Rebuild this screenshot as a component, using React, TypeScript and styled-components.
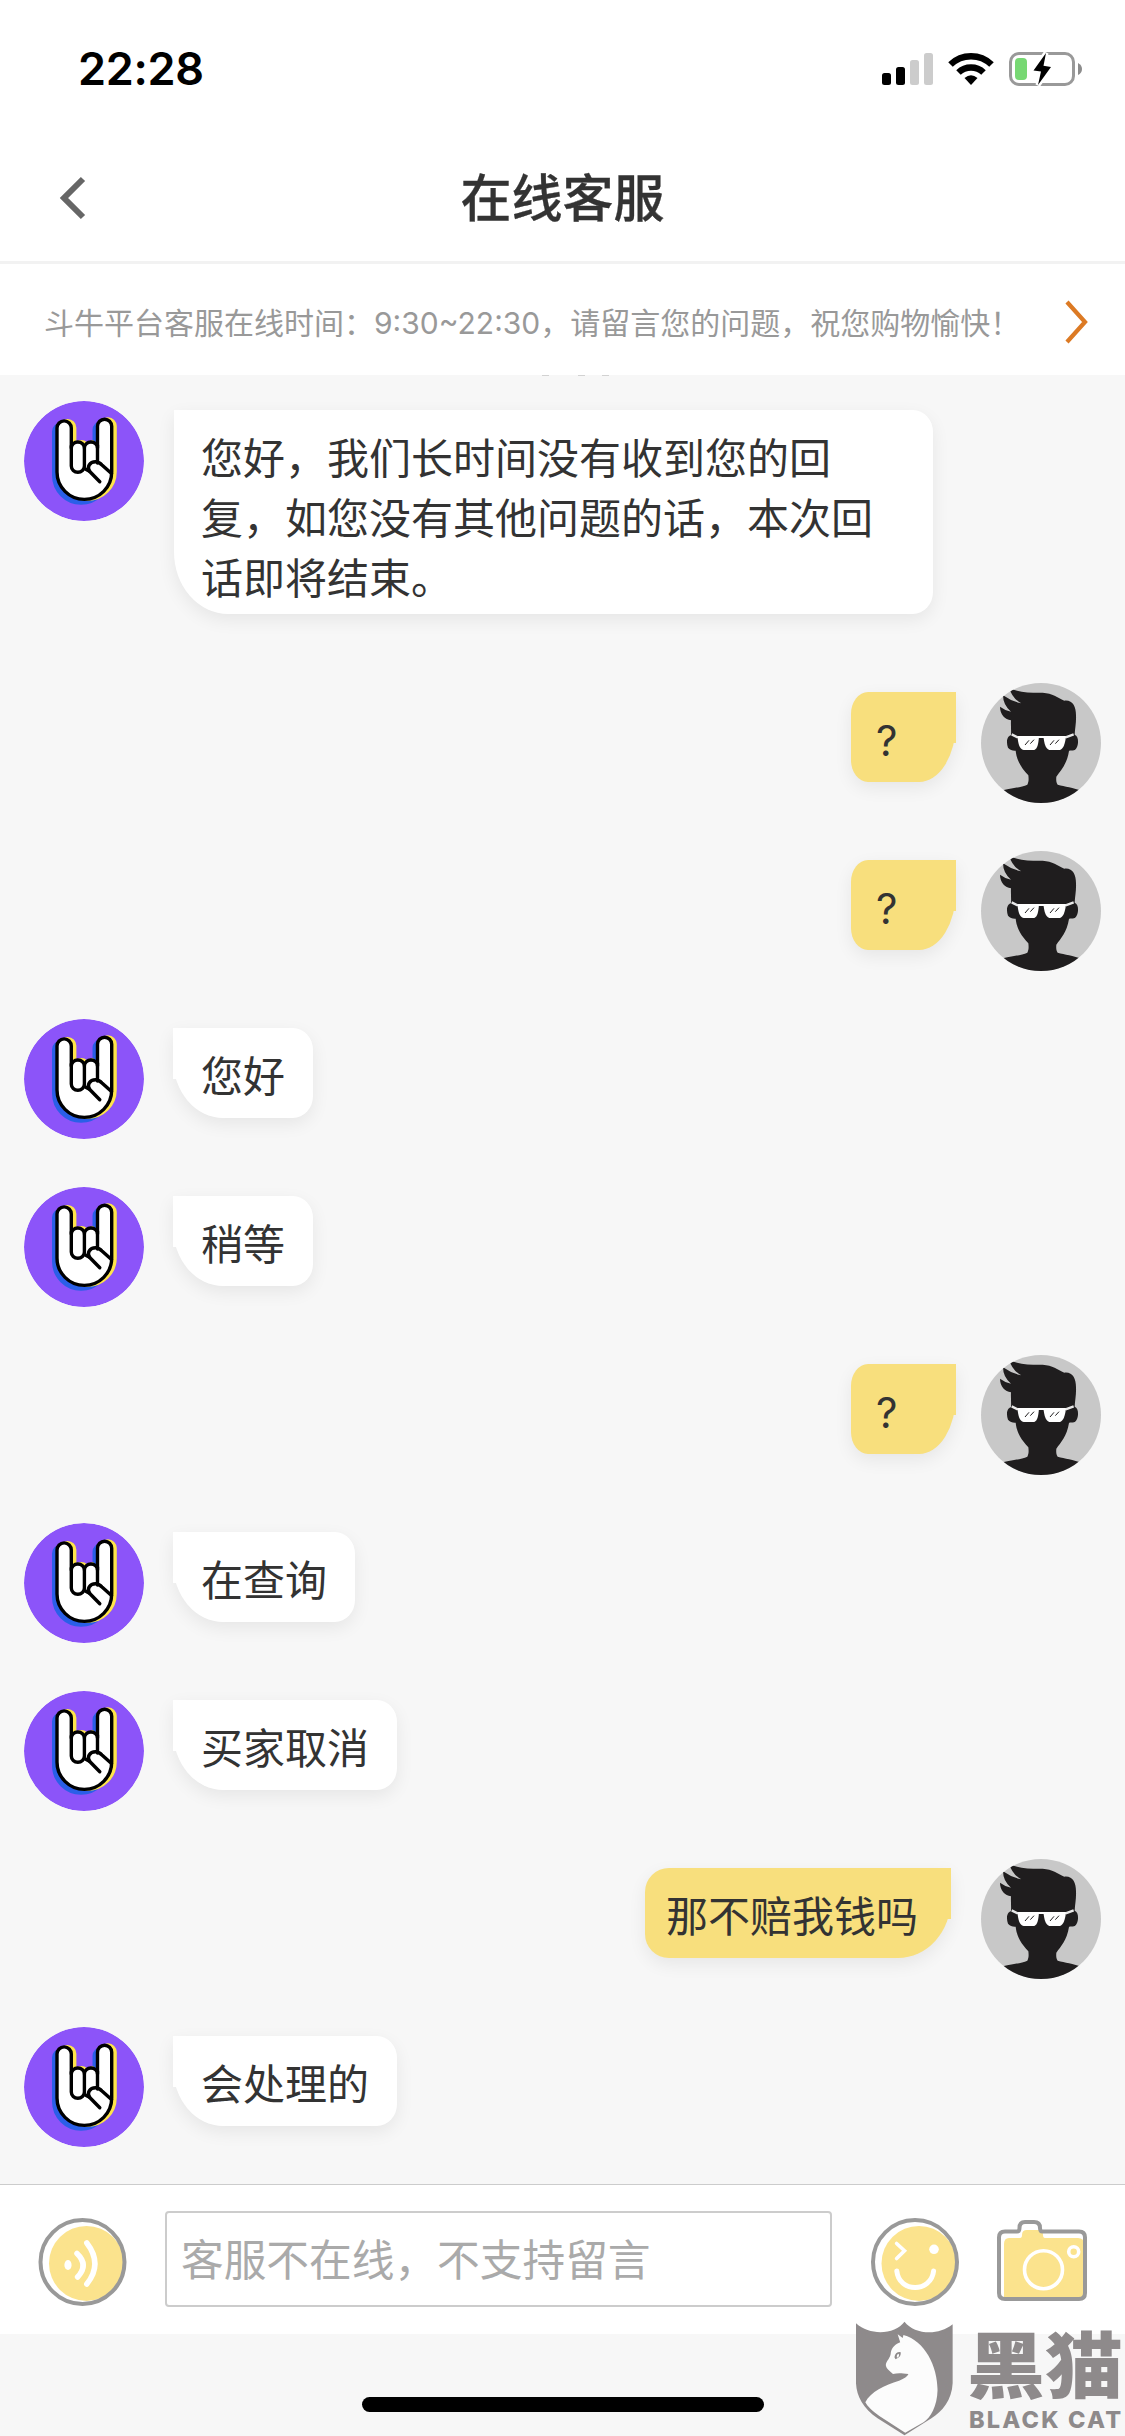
import React from "react";
import styled, { createGlobalStyle } from "styled-components";

const Global = createGlobalStyle`
  * { box-sizing: border-box; }
  body { margin: 0; background: #f7f7f7; }
`;

const cjk = `"Noto Sans CJK SC", sans-serif`;

const Screen = styled.div`
  position: relative;
  width: 1125px;
  height: 2436px;
  display: flex;
  flex-direction: column;
  overflow: hidden;
  background: #f7f7f7;
  color: #333;
  font-family: ${cjk};
`;

const StatusBar = styled.header`
  flex: none;
  height: 132px;
  display: flex;
  align-items: flex-start;
  justify-content: space-between;
  padding: 41px 43px 0 78px;
  background: #fff;
`;

const Clock = styled.time`
  font: 600 45px/56px Inter, sans-serif;
  letter-spacing: -0.3px;
  color: #000;
`;

const StatusIcons = styled.svg`
  width: 200px;
  height: 36px;
  margin-top: 10px;
`;

const NavBar = styled.nav`
  flex: none;
  height: 132px;
  display: grid;
  grid-template-columns: 120px 1fr 120px;
  align-items: center;
  background: #fff;
  border-bottom: 3px solid #f2f2f2;
`;

const IconButton = styled.button`
  display: flex;
  padding: 0;
  border: 0;
  background: none;
`;

const BackButton = styled(IconButton)`
  padding: 2px 0 0 57px;
`;

const Title = styled.h1`
  margin: 0 0 4px;
  text-align: center;
  font: 500 51px/70px ${cjk};
  -webkit-text-stroke: 0.3px currentColor;
`;

const Notice = styled.section`
  flex: none;
  height: 111px;
  display: flex;
  align-items: center;
  justify-content: space-between;
  padding: 4px 35px 0 44px;
  background: #fff;
  color: #999;
  font-size: 30px;
  line-height: 44px;
  white-space: nowrap;
`;

const Latin = styled.span`
  font-family: Inter, sans-serif;
  font-weight: 400;
`;

const Chat = styled.main`
  flex: 1;
  display: flex;
  flex-direction: column;
  gap: 48px;
`;

const ScrolledTime = styled.div`
  flex: none;
  display: flex;
  height: 26px;
  margin-bottom: -48px;
  padding-left: 542px;
`;

const DigitEdge = styled.i<{ $gap: number }>`
  width: 7px;
  height: 1px;
  margin-right: ${(p) => p.$gap}px;
  background: #d2d2d2;
`;

const Row = styled.div<{ $mine?: boolean }>`
  display: flex;
  flex-direction: ${(p) => (p.$mine ? "row-reverse" : "row")};
  align-items: flex-start;
  padding: 0 24px;
`;

const Avatar = styled.svg`
  flex: none;
  width: 120px;
  height: 120px;
  border-radius: 50%;
`;

const Bubble = styled.div<{ $mine?: boolean; $short?: boolean; $long?: boolean }>`
  position: relative;
  max-width: 759px;
  min-width: 105px;
  min-height: 90px;
  margin: 9px ${(p) => (p.$mine ? (p.$short ? 25 : 30) : 0)}px 21px ${(p) => (p.$long ? 30 : 29)}px;
  padding: ${(p) =>
    p.$mine
      ? p.$short
        ? "16px 32px 8px 25px"
        : "16px 33px 8px 21px"
      : p.$long
        ? "16px 28px 8px 27px"
        : "16px 28px 8px"};
  background: ${(p) => (p.$mine ? "#f8df7d" : "#fff")};
  border-radius: ${(p) =>
    p.$mine
      ? p.$short
        ? "17px 0 37px 17px / 22px 0 59px 22px"
        : "24px 0 53px 24px / 24px 0 59px 24px"
      : p.$long
        ? "0 20px 20px 54px / 0 22px 22px 62px"
        : "0 20px 20px 50px / 0 22px 22px 59px"};
  box-shadow: 0 6px 18px rgba(0, 0, 0, 0.07);
  font-size: 42px;
  line-height: 60px;

  &::before {
    content: "";
    position: absolute;
    top: 0;
    ${(p) => (p.$mine ? "right: 0;" : "left: 0;")}
    width: 12px;
    height: 51px;
    background: inherit;
  }
`;

const Composer = styled.footer`
  flex: none;
  height: 150px;
  display: flex;
  align-items: center;
  padding: 0 37px;
  border-top: 1px solid #ccc;
  background: #fff;
`;

const ToolIcon = styled.svg`
  display: block;
  width: 90px;
  height: 92px;
  margin-top: 4px;
`;

const Field = styled.input`
  width: 667px;
  height: 96px;
  margin: 0 38px 2px;
  padding: 0 0 3px 14px;
  border: 2px solid #ccc;
  border-radius: 4px;
  background: #fff;
  font: 42.7px/60px ${cjk};
  &::placeholder { color: #aaa; opacity: 1; }
`;

const CameraButton = styled(IconButton)`
  margin-left: 37px;
`;

const HomeArea = styled.div`
  flex: none;
  height: 102px;
  display: flex;
  justify-content: center;
  padding-top: 63px;
`;

const HomeBar = styled.div`
  width: 402px;
  height: 15px;
  border-radius: 8px;
  background: #000;
`;

const Watermark = styled.aside`
  position: absolute;
  right: 0;
  bottom: 0;
  display: flex;
  align-items: flex-start;
  gap: 16px;
  width: 269px;
  height: 116px;
  color: #8e8a8b;
`;

const WatermarkText = styled.div`
  display: flex;
  flex-direction: column;
`;

const BrandName = styled.strong`
  height: 86px;
  margin-left: -2px;
  font: 900 78px/82px ${cjk};
  transform: scaleY(0.92);
`;

const BrandLatin = styled.strong`
  font: 800 23.5px/28px Inter, sans-serif;
  letter-spacing: 2.2px;
  white-space: nowrap;
`;

const handPath =
  "M33 27A7.15 7.15 0 0 1 47.3 27V47A6.55 6 0 0 1 60.4 47A6.55 6 0 0 1 73.5 47V25.3A7.1 7.1 0 0 1 87.7 25.3V71A27.35 27.35 0 0 1 33 71Z";

const AgentAvatar = () => (
  <Avatar viewBox="0 0 120 120">
    <circle cx="60" cy="60" r="60" fill="#8c54f9" />
    <g strokeWidth="3.4" strokeLinejoin="round">
      <path d={handPath} transform="translate(-3.3 3.6)" fill="#2a5fe8" stroke="#2a5fe8" />
      <path d={handPath} transform="translate(3.4 -0.2)" fill="#ffe54a" stroke="#ffe54a" />
      <path d="M69.500 46V29Q69.500 24.500 73 22V46Z" fill="#2a5fe8" />
      <path d={handPath} fill="#fff" stroke="#000" />
    </g>
    <g fill="none" stroke="#000" strokeWidth="3.4" strokeLinecap="round">
      <path d="M47.3 45V65A6.55 6.3 0 0 0 60.4 65V47" />
      <path d="M73.5 44V62M60.4 67.5L65 70" />
      <path d="M75.8 80.8L66 70.8C62 66 66 60.8 71.5 60.8C74 60.8 76 62 78 64L87.5 72.5" />
    </g>
  </Avatar>
);

const UserAvatar = () => (
  <Avatar viewBox="483 69 360 360">
    <rect x="483" y="69" width="360" height="360" fill="#c8c8c8" />
    <path
      fill="#1f1d1e"
      d="M568 84C600 99 635 98 668 98C698 100 712 112 733 122C758 119 768 140 768 166C769 190 765 205 764 224C779 228 776 264 764 270C757 273 750 270 747 273C741 312 722 332 709 350C708 362 709 368 713 374C735 380 757 382 790 394V440H530V396C560 385 600 384 622 374C627 364 626 354 625 346C602 322 590 300 587 272C580 273 569 270 564 263C559 250 559 229 573 226C574 210 572 195 573 181C555 178 540 164 540 140Q556 152 573 155Q549 135 549 106Q576 125 604 130Q576 115 568 84Z"
    />
    <g fill="#fff">
      <path d="M592 229H657C655 255 652 266 643 270H611C598 268 595 252 592 229Z" />
      <path d="M670 229H738C735 252 731 266 720 270H688C676 267 673 250 670 229Z" />
      <path d="M590 228H740V234H590Z" />
    </g>
    <path d="M575 223L593 232M737 232L761 223" stroke="#e8e8e8" strokeWidth="7" />
    <path
      d="M615 255L627 241M631 251L642 239M690 255L702 241M706 251L717 239"
      stroke="#1f1d1e"
      strokeWidth="3"
    />
  </Avatar>
);

const VoiceIcon = () => (
  <ToolIcon viewBox="37 2216 90 92">
    <circle cx="86.5" cy="2263.4" r="37.5" fill="#fbe38d" />
    <circle cx="82.5" cy="2262" r="42" fill="none" stroke="#999" strokeWidth="4" />
    <ellipse cx="68" cy="2265" rx="3.6" ry="5" fill="#fff" />
    <path
      d="M77 2253.5Q89 2265 77.6 2277M86.8 2243Q103 2264 86.8 2284"
      fill="none"
      stroke="#fff"
      strokeWidth="5.5"
      strokeLinecap="round"
    />
  </ToolIcon>
);

const SmileIcon = () => (
  <ToolIcon viewBox="870 2216 90 92">
    <circle cx="919" cy="2263.4" r="37.5" fill="#fbe38d" />
    <circle cx="915" cy="2262" r="42" fill="none" stroke="#999" strokeWidth="4" />
    <circle cx="934" cy="2249.3" r="4.8" fill="#fff" />
    <g fill="none" stroke="#fff" strokeLinecap="round">
      <path d="M896.6 2243.5L904.5 2250.7L896.6 2258.5" strokeWidth="3.6" />
      <path d="M896.8 2271C899 2293 931 2293 933.6 2271" strokeWidth="5" />
    </g>
  </ToolIcon>
);

const CameraIcon = () => (
  <ToolIcon viewBox="997 2216 90 92">
    <path
      fill="#fbe38d"
      d="M1009 2238H1020Q1022 2238 1022 2235Q1022 2230 1027 2230H1038Q1043 2230 1043 2235Q1043 2238 1045 2238H1078Q1084 2238 1084 2244V2298H1004V2244Q1004 2238 1009 2238Z"
    />
    <path
      fill="none"
      stroke="#999"
      strokeWidth="4"
      d="M1005 2231.5H1017Q1019.500 2231.500 1019.500 2228Q1019.500 2222 1025 2222H1034Q1040 2222 1040 2228Q1040 2231.500 1042.500 2231.500H1079Q1085 2231.500 1085 2237.500V2293Q1085 2299 1079 2299H1005Q999 2299 999 2293V2237.500Q999 2231.500 1005 2231.500Z"
    />
    <circle cx="1043.500" cy="2269.700" r="19" fill="none" stroke="#fff" strokeWidth="3.6" />
    <circle cx="1073.700" cy="2251.700" r="5" fill="none" stroke="#fff" strokeWidth="3.6" />
  </ToolIcon>
);

const ShieldCat = () => (
  <svg width="97" height="116" viewBox="820 450 270 348" preserveAspectRatio="none">
    <path
      fill="#8e8a8b"
      d="M820 460C862 500 930 492 955 455C982 492 1046 500 1089 463V640C1087 690 1060 725 1030 745L955 796L880 745C840 715 822 680 820 640Z"
    />
    <path
      fill="#fcfcfc"
      d="M936 493L950 504L952 495C1012 512 1047 590 1047 660C1046 710 1027 743 1008 757L957 788L885 738C865 722 852 710 846 697C860 665 900 645 940 632C955 626 963 619 966 612C945 609 935 609 923 612C915 604 905 598 903 586C903 573 917 565 917 547C920 532 931 522 943 517Z"
    />
    <path
      fill="#8e8a8b"
      fillRule="evenodd"
      d="M927 562Q929 545 944 546Q948 560 930 568ZM934 563Q942 560 939 551Q932 553 934 563Z"
    />
  </svg>
);

type Message = { text: string; mine?: boolean };

const messages: Message[] = [
  { text: "您好，我们长时间没有收到您的回复，如您没有其他问题的话，本次回话即将结束。" },
  { text: "?", mine: true },
  { text: "?", mine: true },
  { text: "您好" },
  { text: "稍等" },
  { text: "?", mine: true },
  { text: "在查询" },
  { text: "买家取消" },
  { text: "那不赔我钱吗", mine: true },
  { text: "会处理的" },
];

export default function App() {
  return (
    <Screen lang="zh-CN">
      <Global />
      <StatusBar>
        <Clock>22:28</Clock>
        <StatusIcons viewBox="882 51 200 36">
          <rect x="882" y="73" width="9" height="12" rx="2.5" />
          <rect x="896" y="67" width="9" height="18" rx="2.5" />
          <rect x="910" y="60" width="9" height="25" rx="2.5" fill="#ccc" />
          <rect x="924" y="53" width="9" height="32" rx="2.500" fill="#ccc" />
          <g fill="none" stroke="#000" strokeWidth="6.5">
            <path d="M950.500 64.500A29.500 29.500 0 0 1 991.500 64.500" />
            <path d="M958.500 72.500A18 18 0 0 1 983.500 72.500" />
          </g>
          <path d="M964.500 78Q971 72.500 977.500 78L971 85Z" />
          <rect x="1010.500" y="53.500" width="63" height="31" rx="8.500" fill="none" stroke="#999" strokeWidth="3" />
          <rect x="1015" y="58" width="12" height="22" rx="4" fill="#77d873" />
          <path d="M1078 63Q1082 65 1082 69T1078 75Z" fill="#8c8c8c" />
          <path
            d="M1046 53L1033.500 70.500L1041 71.500L1038 85L1051 67L1043.500 65.700Z"
            stroke="#fff"
            strokeWidth="5"
            paintOrder="stroke"
          />
        </StatusIcons>
      </StatusBar>
      <NavBar>
        <BackButton aria-label="返回">
          <svg width="30" height="46" viewBox="0 0 30 46">
            <path d="M26 4L7 23L26 42" fill="none" stroke="#666" strokeWidth="6" />
          </svg>
        </BackButton>
        <Title>在线客服</Title>
      </NavBar>
      <Notice>
        <span>
          斗牛平台客服在线时间：<Latin>9:30~22:30</Latin>，请留言您的问题，祝您购物愉快！
        </span>
        <svg width="26" height="46" viewBox="0 0 26 46">
          <path d="M3 3L21 23L3 43" fill="none" stroke="#dc7a24" strokeWidth="4.200" />
        </svg>
      </Notice>
      <Chat>
        <ScrolledTime>
          <DigitEdge $gap={29} />
          <DigitEdge $gap={17} />
          <DigitEdge $gap={0} />
        </ScrolledTime>
        {messages.map((m, i) => (
          <Row key={i} $mine={m.mine}>
            {m.mine ? <UserAvatar /> : <AgentAvatar />}
            <Bubble $mine={m.mine} $short={m.text.length === 1} $long={m.text.length > 16}>
              {m.text === "?" ? <Latin>?</Latin> : m.text}
            </Bubble>
          </Row>
        ))}
      </Chat>
      <Composer>
        <IconButton aria-label="语音">
          <VoiceIcon />
        </IconButton>
        <Field placeholder="客服不在线，不支持留言" />
        <IconButton aria-label="表情">
          <SmileIcon />
        </IconButton>
        <CameraButton aria-label="相机">
          <CameraIcon />
        </CameraButton>
      </Composer>
      <HomeArea>
        <HomeBar />
      </HomeArea>
      <Watermark>
        <ShieldCat />
        <WatermarkText>
          <BrandName>黑猫</BrandName>
          <BrandLatin>BLACK CAT</BrandLatin>
        </WatermarkText>
      </Watermark>
    </Screen>
  );
}
